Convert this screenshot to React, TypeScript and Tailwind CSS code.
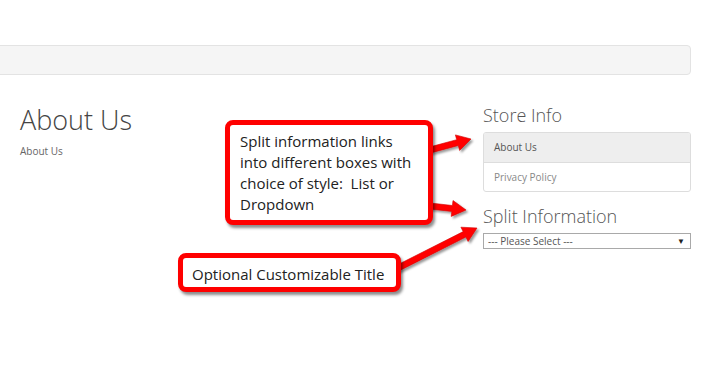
import React from 'react';

interface ArrowProps {
  x1: number;
  y1: number;
  x2: number;
  y2: number;
}

/* red callout arrow, drawn from tail (x1,y1) to tip (x2,y2) */
const Arrow = ({ x1, y1, x2, y2 }: ArrowProps) => {
  const dx = x2 - x1;
  const dy = y2 - y1;
  const len = Math.hypot(dx, dy);
  const ux = dx / len;
  const uy = dy / len;
  const nx = -uy;
  const ny = ux;
  const shaft = 3;
  const head = 8;
  const headLen = 14;
  const bx = x2 - ux * headLen;
  const by = y2 - uy * headLen;
  const pts = [
    [x1 + nx * shaft, y1 + ny * shaft],
    [bx + nx * shaft, by + ny * shaft],
    [bx + nx * head, by + ny * head],
    [x2, y2],
    [bx - nx * head, by - ny * head],
    [bx - nx * shaft, by - ny * shaft],
    [x1 - nx * shaft, y1 - ny * shaft],
  ]
    .map((p) => p.map((v) => v.toFixed(1)).join(','))
    .join(' ');
  return <polygon points={pts} fill="#ff0000" stroke="#d40000" strokeWidth="0.6" filter="url(#arrowShadow)" />;
};

const App = () => {
  return (
    <div className="relative w-[710px] h-[380px] overflow-hidden bg-white font-['Open_Sans',sans-serif]">
      {/* ── breadcrumb bar ── */}
      <div className="pt-[45px] pr-[19px]">
        <div className="-ml-2 h-[30px] rounded border border-[#e3e3e3] bg-[#f5f5f5]" />
      </div>

      {/* ── content ── */}
      <div className="mt-[28px] flex justify-between pl-5 pr-[19px]">
        <div className="pt-[1px]">
          <h1 className="text-[27px] leading-[32px] font-light text-[#444]">About Us</h1>
          <p className="mt-[8px] text-[10px] leading-[14px] text-[#666]">About Us</p>
        </div>

        <div className="w-[208px]">
          <h3 className="text-[18px] leading-[24px] font-light text-[#555]">Store Info</h3>
          <div className="mt-[5px] overflow-hidden rounded-[3px] border border-[#ddd] text-[10px]">
            <div className="flex h-[29px] items-center bg-[#eee] px-[10px] text-[#555]">About Us</div>
            <div className="flex h-[29px] items-center border-t border-[#ddd] px-[10px] text-[#888]">
              Privacy Policy
            </div>
          </div>

          <h3 className="mt-[12px] text-[18px] leading-[24px] font-light text-[#555]">Split Information</h3>
          <div className="mt-[5px] flex h-[16px] items-center justify-between border border-[#a9a9a9] pl-[4px] pr-[5px] text-[10px] text-[#555]">
            <span>--- Please Select ---</span>
            <span className="text-[8px] text-[#222]">▼</span>
          </div>
        </div>
      </div>

      {/* ── annotation arrows ── */}
      <svg className="pointer-events-none absolute inset-0" width="710" height="380">
        <defs>
          <filter id="arrowShadow" x="-20%" y="-50%" width="160%" height="200%">
            <feDropShadow dx="2" dy="2" stdDeviation="1.2" floodColor="#000" floodOpacity="0.4" />
          </filter>
        </defs>
        <Arrow x1={430} y1={150} x2={471} y2={139} />
        <Arrow x1={430} y1={206} x2={466} y2={210} />
        <Arrow x1={396} y1={269} x2={477} y2={228} />
      </svg>

      {/* ── callouts ── */}
      <div className="absolute left-[225px] top-[120px] h-[105px] w-[208px] rounded-[8px] border-[5px] border-[#ff0000] bg-white pl-[10px] pr-[16px] pt-[6px] font-['Open_Sans',sans-serif] text-[15px] leading-[21px] text-[#222] shadow-[2px_3px_3px_rgba(0,0,0,0.45)]">
        Split information links into different boxes with choice of style:&nbsp; List or Dropdown
      </div>
      <div className="absolute left-[178px] top-[253px] flex h-[39px] w-[223px] items-center rounded-[8px] border-[5px] border-[#ff0000] bg-white pl-[9px] pt-[3px] font-['Open_Sans',sans-serif] text-[15px] text-[#222] shadow-[2px_3px_3px_rgba(0,0,0,0.45)]">
        Optional Customizable Title
      </div>
    </div>
  );
};

export default App;
